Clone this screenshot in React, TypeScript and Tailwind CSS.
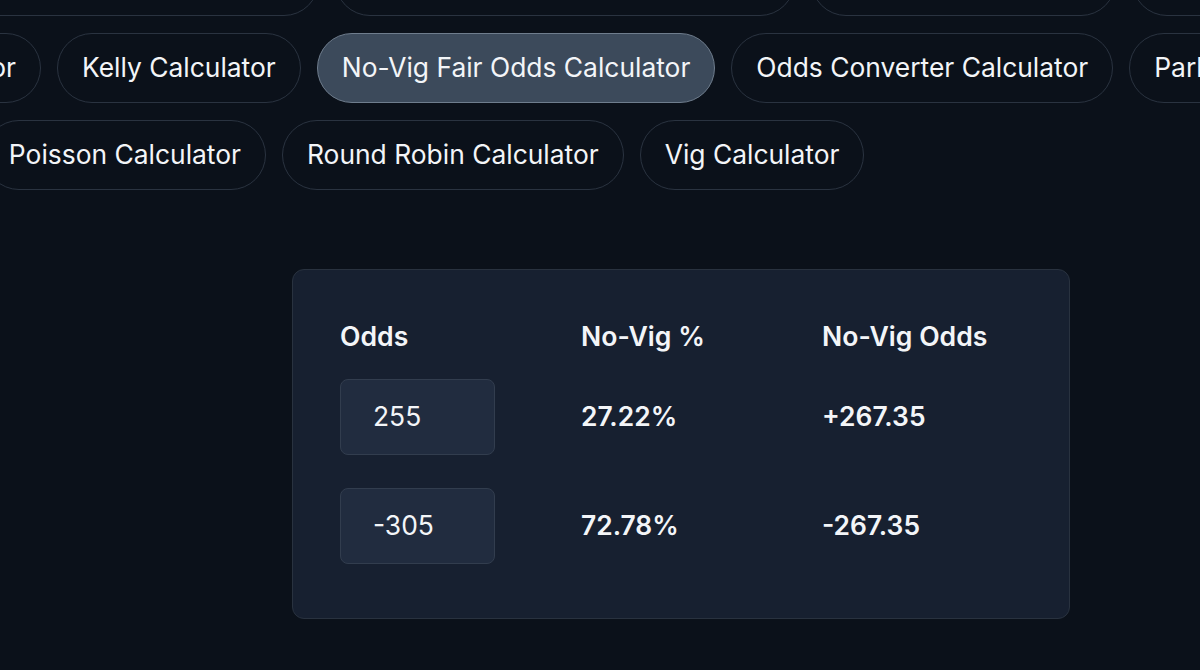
import React from 'react';

// top row sits mostly above the fold; only the pill outlines show
const TOP_ROW = [
  { lead: true, w: 400 },
  { w: 460 },
  { w: 305 },
  { w: 260 },
];

const ROWS: { lead: number; pills: { label: string; active?: boolean }[] }[] = [
  {
    lead: 41,
    pills: [
      { label: 'Implied Odds Calculator' },
      { label: 'Kelly Calculator' },
      { label: 'No-Vig Fair Odds Calculator', active: true },
      { label: 'Odds Converter Calculator' },
      { label: 'Parlay Calculator' },
    ],
  },
  {
    lead: 266,
    pills: [
      { label: 'Poisson Calculator' },
      { label: 'Round Robin Calculator' },
      { label: 'Vig Calculator' },
    ],
  },
];

const RESULTS = [
  { odds: '255', pct: '27.22%', fair: '+267.35' },
  { odds: '-305', pct: '72.78%', fair: '-267.35' },
];

function Pill({ label, active }: { label: string; active?: boolean }) {
  return (
    <div
      className={`h-[70px] shrink-0 rounded-full border flex items-center px-6 whitespace-nowrap text-[26.4px] text-[#f3f5f8] ${
        active ? 'bg-[#3c4a5b] border-[#6f7d8d]' : 'bg-transparent border-[#2a3340]'
      }`}
    >
      {label}
    </div>
  );
}

export default function App() {
  return (
    <div
      className="h-[670px] w-[1200px] overflow-hidden bg-[#0b111a] text-[#f3f5f8]"
      style={{ fontFamily: 'Inter, "Noto Sans", sans-serif' }}
    >
      {/* Calculator pills */}
      <div className="mt-[-54px] flex flex-col gap-[17px]">
        <div className="flex gap-4">
          <div className="w-[319px] shrink-0 flex justify-end">
            <div className="h-[70px] w-[400px] shrink-0 rounded-full border border-[#2a3340]" />
          </div>
          {TOP_ROW.slice(1).map((p, i) => (
            <div key={i} className="h-[70px] shrink-0 rounded-full border border-[#2a3340]" style={{ width: p.w }} />
          ))}
        </div>
        {ROWS.map((row, i) => (
          <div key={i} className="flex gap-4">
            <div className="shrink-0 flex justify-end" style={{ width: row.lead }}>
              <Pill label={row.pills[0].label} />
            </div>
            {row.pills.slice(1).map((p) => (
              <Pill key={p.label} label={p.label} active={p.active} />
            ))}
          </div>
        ))}
      </div>

      {/* No-vig card */}
      <div className="ml-[292px] mt-[79px] w-[778px] rounded-xl border border-[#29323f] bg-[#172030] px-[47px] pt-[47px] pb-[54px]">
        <div className="grid grid-cols-[241px_241px_1fr] text-[26.6px] leading-[39px] font-semibold">
          <div>Odds</div>
          <div>No-Vig %</div>
          <div>No-Vig Odds</div>
        </div>
        <div className="mt-[23px] flex flex-col gap-[33px]">
          {RESULTS.map((r) => (
            <div key={r.odds} className="grid grid-cols-[241px_241px_1fr] items-center text-[26.4px]">
              <div className="h-[76px] w-[155px] rounded-lg border border-[#323d4e] bg-[#212c3f] pl-8 flex items-center">
                {r.odds}
              </div>
              <div className="font-semibold">{r.pct}</div>
              <div className="font-semibold">{r.fair}</div>
            </div>
          ))}
        </div>
      </div>
    </div>
  );
}
